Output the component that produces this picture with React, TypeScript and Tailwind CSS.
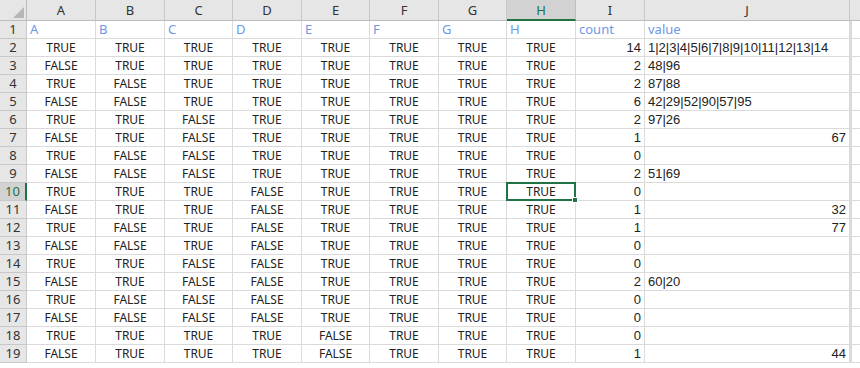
import React from 'react';

// column widths taken from the sheet (row header, A..J, then the rest)
const COLS = ['A', 'B', 'C', 'D', 'E', 'F', 'G', 'H', 'I', 'J'];

const extra: Record<number, { count: number; value?: string; num?: string }> = {
  2: { count: 14, value: '1|2|3|4|5|6|7|8|9|10|11|12|13|14' },
  3: { count: 2, value: '48|96' },
  4: { count: 2, value: '87|88' },
  5: { count: 6, value: '42|29|52|90|57|95' },
  6: { count: 2, value: '97|26' },
  7: { count: 1, num: '67' },
  8: { count: 0 },
  9: { count: 2, value: '51|69' },
  10: { count: 0 },
  11: { count: 1, num: '32' },
  12: { count: 1, num: '77' },
  13: { count: 0 },
  14: { count: 0 },
  15: { count: 2, value: '60|20' },
  16: { count: 0 },
  17: { count: 0 },
  18: { count: 0 },
  19: { count: 1, num: '44' },
};

// A..H follow a binary count: bit i off -> TRUE
const flags = (row: number) => {
  const n = row - 2;
  return Array.from({ length: 8 }, (_, i) => ((n >> i) & 1) === 0);
};

const cell = 'h-[18px] border-b border-r border-[#dadada] px-[3px] leading-[17px] whitespace-nowrap overflow-hidden';
// digits and pipes are narrow in the sheet's font
const num = 'font-["Liberation_Sans",sans-serif] text-[13px]';

export default function App() {
  const rows = Array.from({ length: 18 }, (_, i) => i + 2);

  return (
    <div
      className="w-[860px] h-[368px] overflow-hidden bg-white text-[12px] text-[#222]"
      style={{ fontFamily: '"Noto Sans", "Noto Sans CJK SC", sans-serif' }}
    >
      <div className="grid grid-cols-[27px_69px_69px_68px_69px_68px_69px_68px_69px_69px_205px_1fr]">
        {/* column headers */}
        <div className="h-[21px] bg-[#e6e6e6] border-b border-r border-[#bdbdbd] flex items-end justify-end p-[2px]">
          <svg width="11" height="11" viewBox="0 0 11 11">
            <polygon points="11,0 11,11 0,11" fill="#b7b7b7" />
          </svg>
        </div>
        {COLS.map((c) =>
          c === 'H' ? (
            <div
              key={c}
              className="h-[21px] bg-[#d2d2d2] border-b-2 border-r border-b-[#217346] border-r-[#bdbdbd] text-center leading-[20px] text-[13px] text-[#217346]"
            >
              {c}
            </div>
          ) : (
            <div
              key={c}
              className="h-[21px] bg-[#e6e6e6] border-b border-r border-[#c8c8c8] border-b-[#bdbdbd] text-center leading-[20px] text-[13px] text-[#333]"
            >
              {c}
            </div>
          )
        )}
        <div className="h-[21px] bg-[#e6e6e6] border-b border-[#bdbdbd]" />

        {/* row 1: titles */}
        <div className="h-[18px] bg-[#e6e6e6] border-b border-r border-[#c8c8c8] text-center leading-[17px] text-[13px] text-[#333]">
          1
        </div>
        {['A', 'B', 'C', 'D', 'E', 'F', 'G', 'H', 'count', 'value'].map((t) => (
          <div key={t} className={`${cell} text-[13px] text-[#6f97e6]`}>
            {t}
          </div>
        ))}
        <div className="h-[18px] border-b border-l-2 border-[#dadada]" />

        {rows.map((r) => {
          const e = extra[r];
          const sel = r === 10;
          return (
            <React.Fragment key={r}>
              <div
                className={
                  sel
                    ? 'h-[18px] bg-[#d2d2d2] border-b border-r-2 border-b-[#c8c8c8] border-r-[#217346] text-center leading-[17px] text-[13px] text-[#217346]'
                    : 'h-[18px] bg-[#e6e6e6] border-b border-r border-[#c8c8c8] text-center leading-[17px] text-[13px] text-[#333]'
                }
              >
                {r}
              </div>
              {flags(r).map((v, i) => (
                <div key={i} className={`${cell} text-center ${sel && i === 7 ? 'relative overflow-visible' : ''}`}>
                  {v ? 'TRUE' : 'FALSE'}
                  {sel && i === 7 && (
                    <div className="absolute -left-[1px] -top-[1px] w-[70px] h-[19px] border-2 border-[#217346]">
                      <div className="absolute -right-[4px] -bottom-[4px] w-[6px] h-[6px] bg-[#217346] border border-white" />
                    </div>
                  )}
                </div>
              ))}
              <div className={`${cell} ${num} text-right`}>{e.count}</div>
              <div className={`${cell} ${num} ${e.num ? 'text-right' : 'text-left'}`}>{e.num ?? e.value ?? ''}</div>
              <div className="h-[18px] border-b border-l-2 border-[#dadada]" />
            </React.Fragment>
          );
        })}
      </div>
    </div>
  );
}
